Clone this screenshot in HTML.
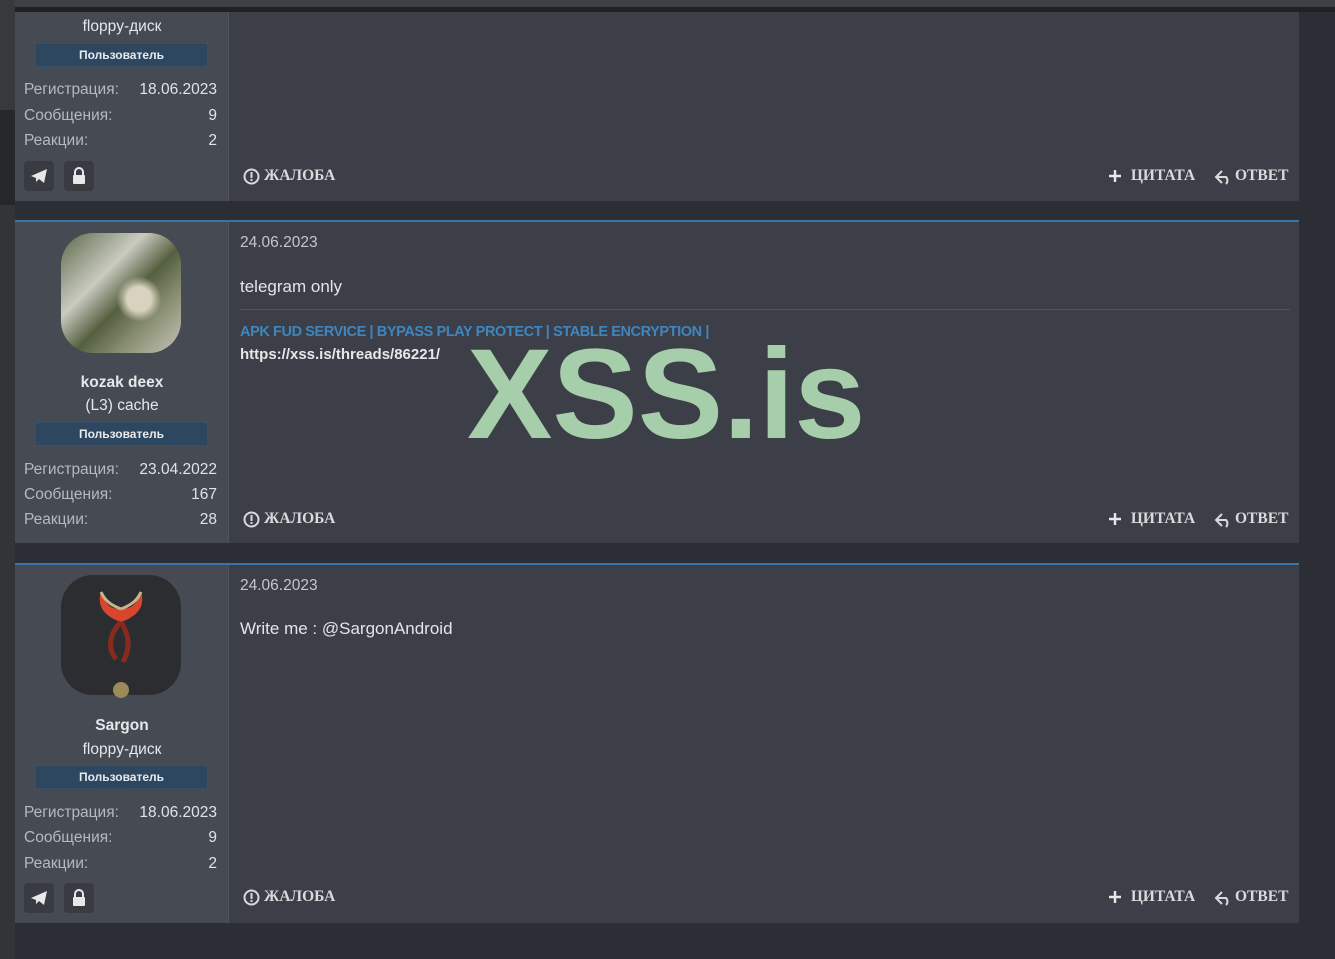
<!DOCTYPE html>
<html><head><meta charset="utf-8"><style>
*{margin:0;padding:0;box-sizing:border-box}
body{width:1335px;height:959px;background:#2b2e34;position:relative;overflow:hidden;font-family:"Liberation Sans","DejaVu Sans",sans-serif}
.a{position:absolute}
.post{position:absolute;left:15px;width:1284px;background:#3c3f47}
.side{position:absolute;left:0;top:0;bottom:0;width:214px;background:#464a53;border-right:1px solid #505560}
.bl{position:absolute;left:0;width:1284px;height:2px;background:#3b73a6}
.lbl{position:absolute;left:9px;color:#b5b9c0;font-size:15.5px}
.val{position:absolute;right:11px;color:#e2e3e5;font-size:15.5px;text-align:right}
.badge{position:absolute;left:20px;width:173px;height:24px;background:#2d4761;border:1px dotted #3d5a78;color:#e8eaec;font-size:12px;font-weight:bold;text-align:center;line-height:22px}
.nm{position:absolute;left:0;width:214px;text-align:center;color:#e6e7e9;font-size:15.5px}
.act{position:absolute;color:#d9dadc;font-family:"Liberation Serif","DejaVu Serif",serif;font-weight:bold;font-size:15.5px;letter-spacing:0;display:flex;align-items:center;gap:4px}
.ib{position:absolute;width:30px;height:30px;background:#383b41;border-radius:4px}
.date{position:absolute;left:225px;color:#c3c6cb;font-size:15.5px}
</style></head><body>
<div class="a" style="left:0;top:0;width:15px;height:110px;background:#38393b"></div>
<div class="a" style="left:0;top:110px;width:15px;height:95px;background:#25272b"></div>
<div class="a" style="left:0;top:205px;width:15px;height:754px;background:#333436"></div>
<div class="a" style="left:15px;top:0;width:1320px;height:7px;background:#3e4046"></div>
<div class="a" style="left:15px;top:7px;width:1320px;height:5px;background:#1f2126"></div>

<!-- post 1 -->
<div class="post" style="top:12px;height:189px">
 <div class="side">
  <div class="nm" style="top:6px">floppy-диск</div>
  <div class="badge" style="top:31px">Пользователь</div>
  <div class="lbl" style="top:69px">Регистрация:</div><div class="val" style="top:69px">18.06.2023</div>
  <div class="lbl" style="top:95px">Сообщения:</div><div class="val" style="top:95px">9</div>
  <div class="lbl" style="top:120px">Реакции:</div><div class="val" style="top:120px">2</div>
  <div class="ib" style="left:9px;top:149px"><svg width="30" height="30"><path d="M7 15 L23 8 L20 22 L15 18 L12 21 L12 17 Z" fill="#e8e8e8"/></svg></div>
  <div class="ib" style="left:49px;top:149px"><svg width="30" height="30"><path d="M11 14 V11 a4 4 0 0 1 8 0 V14" stroke="#e8e8e8" stroke-width="2" fill="none"/><rect x="9" y="14" width="12" height="9" rx="1" fill="#e8e8e8"/></svg></div>
 </div>
 <div class="act" style="left:228px;top:155px"><svg width="17" height="17"><circle cx="8.5" cy="8.5" r="7" stroke="#d9dadc" stroke-width="2" fill="none"/><rect x="7.5" y="4" width="2" height="6" fill="#d9dadc"/><rect x="7.5" y="11" width="2" height="2" fill="#d9dadc"/></svg>ЖАЛОБА</div>
 <div class="act" style="left:1092px;top:155px"><svg width="16" height="16"><path d="M8 2V14M2 8H14" stroke="#e8e8e8" stroke-width="2.4"/></svg>&nbsp;ЦИТАТА</div>
 <div class="act" style="left:1199px;top:155px;gap:1px"><svg width="20" height="17"><path d="M8 3 L2 9 L8 15 M3 9 H12 a5 5 0 0 1 0 7" stroke="#d9dadc" stroke-width="2" fill="none"/></svg>ОТВЕТ</div>
</div>

<!-- post 2 -->
<div class="bl" style="left:15px;top:220px"></div>
<div class="post" style="top:222px;height:321px">
 <div class="side">
  <div class="a" style="left:46px;top:11px;width:120px;height:120px;border-radius:32px;background:radial-gradient(circle at 65% 55%,#d8d2bf 0 12%,transparent 22%),linear-gradient(135deg,#5e6a4c,#c9cbc0 35%,#55603f 55%,#8d9275 75%,#c4c4b8)"></div>
  <div class="nm" style="top:152px;font-weight:bold">kozak deex</div>
  <div class="nm" style="top:175px">(L3) cache</div>
  <div class="badge" style="top:200px">Пользователь</div>
  <div class="lbl" style="top:239px">Регистрация:</div><div class="val" style="top:239px">23.04.2022</div>
  <div class="lbl" style="top:264px">Сообщения:</div><div class="val" style="top:264px">167</div>
  <div class="lbl" style="top:289px">Реакции:</div><div class="val" style="top:289px">28</div>
 </div>
 <div class="date" style="top:12px">24.06.2023</div>
 <div class="a" style="left:225px;top:55px;color:#e4e5e7;font-size:17px">telegram only</div>
 <div class="a" style="left:225px;top:87px;width:1050px;height:1px;background:#50545c"></div>
 <div class="a" style="left:225px;top:102px;color:#3f86c0;font-size:14.5px;font-weight:bold;letter-spacing:-0.4px">APK FUD SERVICE | BYPASS PLAY PROTECT | STABLE ENCRYPTION |</div>
 <div class="a" style="left:225px;top:124px;color:#e6e7e9;font-size:15px;font-weight:bold">https://xss.is/threads/86221/</div>
 <div class="act" style="left:228px;top:288px"><svg width="17" height="17"><circle cx="8.5" cy="8.5" r="7" stroke="#d9dadc" stroke-width="2" fill="none"/><rect x="7.5" y="4" width="2" height="6" fill="#d9dadc"/><rect x="7.5" y="11" width="2" height="2" fill="#d9dadc"/></svg>ЖАЛОБА</div>
 <div class="act" style="left:1092px;top:288px"><svg width="16" height="16"><path d="M8 2V14M2 8H14" stroke="#e8e8e8" stroke-width="2.4"/></svg>&nbsp;ЦИТАТА</div>
 <div class="act" style="left:1199px;top:288px;gap:1px"><svg width="20" height="17"><path d="M8 3 L2 9 L8 15 M3 9 H12 a5 5 0 0 1 0 7" stroke="#d9dadc" stroke-width="2" fill="none"/></svg>ОТВЕТ</div>
</div>
<div class="a" style="left:467px;top:325px;color:#a6ceaa;font-size:128px;font-weight:bold;line-height:140px">XSS.is</div>

<!-- post 3 -->
<div class="bl" style="left:15px;top:563px"></div>
<div class="post" style="top:565px;height:358px">
 <div class="side">
  <div class="a" style="left:46px;top:10px;width:120px;height:120px;border-radius:32px;background:#2b2d31"></div>
  <svg class="a" style="left:76px;top:22px" width="60" height="80"><path d="M10 5 C5 20 15 30 30 35 C45 30 55 20 50 5 C45 20 38 22 30 22 C22 22 15 20 10 5Z" fill="#d9452f"/><path d="M10 5 C14 14 20 18 30 22 M50 5 C46 14 40 18 30 22" stroke="#c9b58a" stroke-width="3" fill="none"/><path d="M30 35 C20 45 15 60 25 72 M30 35 C38 48 40 60 32 75" stroke="#8a2a1f" stroke-width="5" fill="none"/></svg>
  <div class="a" style="left:98px;top:117px;width:16px;height:16px;border-radius:50%;background:#9c8a5a"></div>
  <div class="nm" style="top:152px;font-weight:bold">Sargon</div>
  <div class="nm" style="top:176px">floppy-диск</div>
  <div class="badge" style="top:200px">Пользователь</div>
  <div class="lbl" style="top:239px">Регистрация:</div><div class="val" style="top:239px">18.06.2023</div>
  <div class="lbl" style="top:264px">Сообщения:</div><div class="val" style="top:264px">9</div>
  <div class="lbl" style="top:290px">Реакции:</div><div class="val" style="top:290px">2</div>
  <div class="ib" style="left:9px;top:318px"><svg width="30" height="30"><path d="M7 15 L23 8 L20 22 L15 18 L12 21 L12 17 Z" fill="#e8e8e8"/></svg></div>
  <div class="ib" style="left:49px;top:318px"><svg width="30" height="30"><path d="M11 14 V11 a4 4 0 0 1 8 0 V14" stroke="#e8e8e8" stroke-width="2" fill="none"/><rect x="9" y="14" width="12" height="9" rx="1" fill="#e8e8e8"/></svg></div>
 </div>
 <div class="date" style="top:12px">24.06.2023</div>
 <div class="a" style="left:225px;top:54px;color:#e4e5e7;font-size:17px">Write me : @SargonAndroid</div>
 <div class="act" style="left:228px;top:323px"><svg width="17" height="17"><circle cx="8.5" cy="8.5" r="7" stroke="#d9dadc" stroke-width="2" fill="none"/><rect x="7.5" y="4" width="2" height="6" fill="#d9dadc"/><rect x="7.5" y="11" width="2" height="2" fill="#d9dadc"/></svg>ЖАЛОБА</div>
 <div class="act" style="left:1092px;top:323px"><svg width="16" height="16"><path d="M8 2V14M2 8H14" stroke="#e8e8e8" stroke-width="2.4"/></svg>&nbsp;ЦИТАТА</div>
 <div class="act" style="left:1199px;top:323px;gap:1px"><svg width="20" height="17"><path d="M8 3 L2 9 L8 15 M3 9 H12 a5 5 0 0 1 0 7" stroke="#d9dadc" stroke-width="2" fill="none"/></svg>ОТВЕТ</div>
</div>
</body></html>
